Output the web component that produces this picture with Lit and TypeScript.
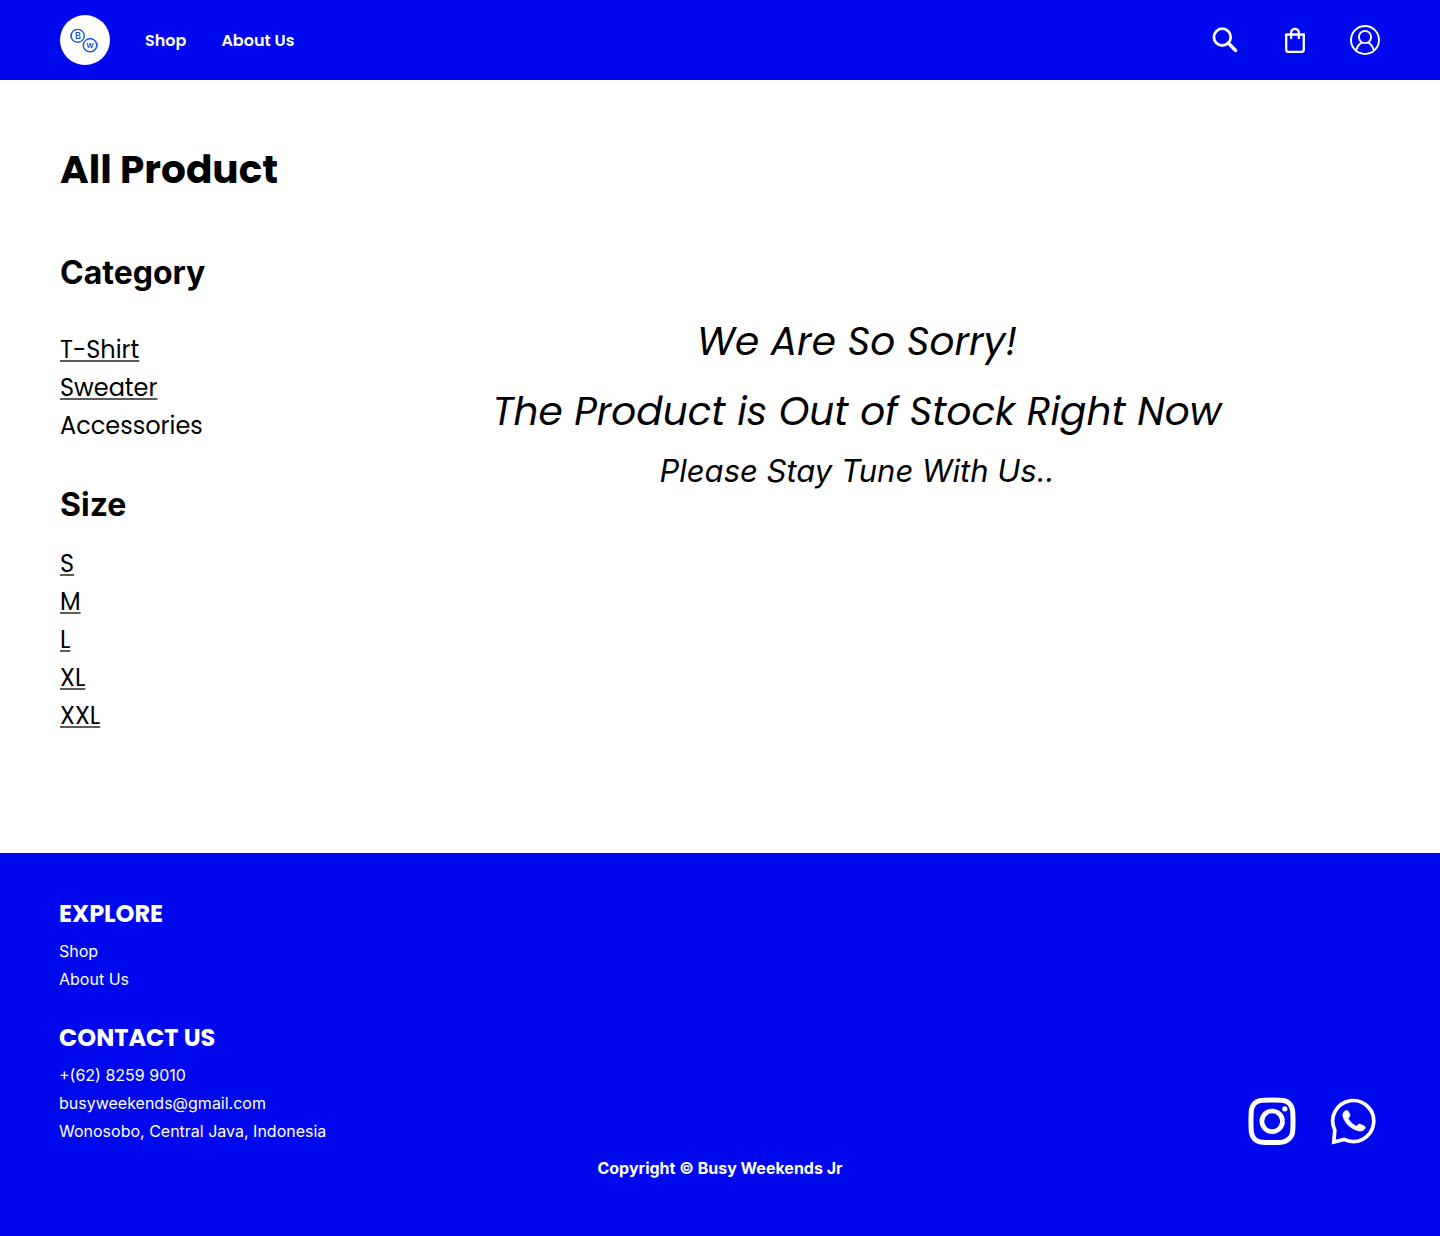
import { LitElement, html, css, svg } from "lit";
import { customElement } from "lit/decorators.js";

const logo = svg`<svg class="logo-art" viewBox="0 0 50 50" aria-hidden="true">
  <circle cx="25" cy="25" r="25" fill="#fff"/>
  <g fill="none" stroke="#1155d4">
    <circle cx="17.7" cy="20.7" r="6.5" stroke-width="1.1"/>
    <ellipse cx="17.5" cy="20.9" rx="7" ry="6.3" stroke-width=".7"/>
    <circle cx="30" cy="30.3" r="6.6" stroke-width="1.200"/>
    <ellipse cx="30.2" cy="30.2" rx="7.2" ry="6.5" stroke-width=".8"/>
  </g>
  <text class="logo-letter" x="18" y="24">B</text>
  <text class="logo-letter" x="30" y="33">w</text>
</svg>`;

const searchIcon = svg`<svg class="icon" viewBox="0 0 30 30" fill="none" stroke="#fff" aria-hidden="true">
  <circle cx="12.3" cy="12.1" r="8.400" stroke-width="2.800"/>
  <path d="M18.300 18.100L25.600 25.400" stroke-width="3.500" stroke-linecap="round"/>
</svg>`;

const bagIcon = svg`<svg class="icon" viewBox="0 0 30 30" fill="none" stroke="#fff" stroke-width="2.300" aria-hidden="true">
  <path d="M6.200 9.500H23.800V24.500a2.400 2.400 0 0 1-2.400 2.400H8.600a2.400 2.400 0 0 1-2.400-2.400Z" stroke-linejoin="round"/>
  <path d="M11.200 13.200V7.600a3.800 3.800 0 0 1 7.600 0V13.200" stroke-linecap="round"/>
</svg>`;

const userIcon = svg`<svg class="icon" viewBox="0 0 30 30" fill="none" stroke="#fff" stroke-width="1.900" aria-hidden="true">
  <circle cx="15" cy="15" r="14"/>
  <circle cx="15" cy="12" r="6.100"/>
  <path d="M6 25.500C7.200 21.500 9.200 19 12 17.400M24 25.500C22.800 21.500 20.800 19 18 17.400"/>
</svg>`;

const instagramIcon = svg`<svg class="social-icon" viewBox="0 0 48 48" fill="none" stroke="#fff" aria-hidden="true">
  <path d="M24 3C35 3 38.200 3.200 41.400 6.500S45 13 45 24.300S44.700 38.300 41.400 41.600S35 45.600 24 45.600S9.800 45.300 6.500 41.900S3 35.500 3 24.300S3.200 9.800 6.500 6.500S13 3 24 3Z" stroke-width="5"/>
  <circle cx="24.200" cy="24.300" r="10.300" stroke-width="4.700"/>
  <circle cx="36.800" cy="11.800" r="2.600" fill="#fff" stroke="none"/>
</svg>`;

const whatsappIcon = svg`<svg class="social-icon" viewBox="-1 0 48 48" aria-hidden="true">
  <path d="M4.300 32.800A20.500 20.500 0 1 1 13.600 42.200L3.300 44.800Z" transform="translate(.5 .2)" fill="none" stroke="#fff" stroke-width="3.700"/>
  <path d="M14.600 14.200C15.800 13.200 17.600 13.100 18.300 14.200L19.900 17.600C20.300 18.800 19.600 19.700 18.200 21.500C20 25 22.600 27.500 26.500 29.200C28.200 27.400 29.200 26.700 30.400 27.200L34.600 29.200C35.800 29.900 35.200 31.600 34 32.700C32.500 34.100 30.300 34.400 28 33.800C20.500 31.700 15 26.500 13 19.600C12.400 17.500 13.100 15.600 14.600 14.200Z" fill="#fff" stroke="#fff" stroke-width=".6"/>
</svg>`;

@customElement("app-root")
export class AppRoot extends LitElement {
  static styles = css`
    :host {
      display: flex;
      flex-direction: column;
      min-height: 100vh;
      background: #fff;
      color: #000;
      font-family: Inter, sans-serif;
    }
    h1, h2, p, ul { margin: 0; padding: 0; }
    ul { list-style: none; }
    a { color: inherit; text-decoration: none; }
    .display { font-family: Poppins, Inter, sans-serif; }

    .header {
      display: flex;
      align-items: center;
      justify-content: space-between;
      padding: 15px 60px;
      background: #0008ee;
      color: #fff;
    }
    .nav, .actions { display: flex; align-items: center; }
    .nav { gap: 35px; font-size: 16px; font-weight: 600; }
    .actions { gap: 40px; }
    .logo-art { display: block; width: 50px; height: 50px; }
    .logo-letter {
      fill: #1155d4;
      font-family: Inter, sans-serif;
      font-size: 9px;
      font-weight: 600;
      text-anchor: middle;
    }
    .action {
      display: block;
      padding: 0;
      border: 0;
      background: none;
      cursor: pointer;
    }
    .icon { display: block; width: 30px; height: 30px; }

    .main { flex: 1; padding: 60px 60px 118px; }
    .title { font-size: 39px; line-height: 60px; font-weight: 700; }
    .content { display: flex; margin-top: 53px; }
    .filters { flex: 0 0 274px; }
    .filter-title { font-size: 32px; line-height: 40px; font-weight: 700; }
    .filter-list { font-size: 24px; line-height: 38px; }
    .categories { margin: 38px 0 40px; }
    .sizes { margin-top: 20px; }
    .link {
      text-decoration: underline 2px #5c5c5c;
      text-underline-offset: 2px;
      text-decoration-skip-ink: none;
    }
    .message { flex: 1; padding-top: 54px; text-align: center; font-style: italic; }
    .lead { font-size: 39px; line-height: 70px; }
    .note { font-size: 31px; line-height: 48px; }

    .footer { padding: 43px 59px 54px; background: #0008ee; color: #fff; }
    .footer-row { display: flex; align-items: flex-end; justify-content: space-between; }
    .footer-groups { display: grid; gap: 27px; }
    .footer-title { font-size: 24px; line-height: 36px; font-weight: 700; margin-bottom: 5px; }
    .footer-list { font-size: 16px; line-height: 28px; }
    .socials { display: flex; gap: 33px; padding-right: 4px; }
    .social-icon { display: block; width: 48px; height: 48px; }
    .copyright {
      margin-top: 9px;
      font-size: 16px;
      line-height: 28px;
      font-weight: 700;
      text-align: center;
    }
  `;

  private categories = [
    { name: "T-Shirt", linked: true },
    { name: "Sweater", linked: true },
    { name: "Accessories", linked: false },
  ];
  private sizes = ["S", "M", "L", "XL", "XXL"];

  render() {
    return html`
      <header class="header">
        <nav class="nav display" aria-label="Main">
          <a href="#home" aria-label="Home">${logo}</a>
          <a href="#shop">Shop</a>
          <a href="#about">About Us</a>
        </nav>
        <div class="actions">
          <button class="action" type="button" aria-label="Search">${searchIcon}</button>
          <button class="action" type="button" aria-label="Bag">${bagIcon}</button>
          <button class="action" type="button" aria-label="Account">${userIcon}</button>
        </div>
      </header>

      <main class="main">
        <h1 class="title display">All Product</h1>
        <div class="content">
          <aside class="filters">
            <h2 class="filter-title">Category</h2>
            <ul class="filter-list categories display">
              ${this.categories.map(
                (c) => html`<li><a class=${c.linked ? "link" : ""} href="#${c.name}">${c.name}</a></li>`
              )}
            </ul>
            <h2 class="filter-title">Size</h2>
            <ul class="filter-list sizes display">
              ${this.sizes.map((s) => html`<li><a class="link" href="#${s}">${s}</a></li>`)}
            </ul>
          </aside>
          <section class="message">
            <p class="lead display">We Are So Sorry!</p>
            <p class="lead display">The Product is Out of Stock Right Now</p>
            <p class="note">Please Stay Tune With Us..</p>
          </section>
        </div>
      </main>

      <footer class="footer">
        <div class="footer-row">
          <div class="footer-groups">
            <section>
              <h2 class="footer-title display">EXPLORE</h2>
              <ul class="footer-list">
                <li><a href="#shop">Shop</a></li>
                <li><a href="#about">About Us</a></li>
              </ul>
            </section>
            <section>
              <h2 class="footer-title display">CONTACT US</h2>
              <ul class="footer-list">
                <li><a href="tel:+6282599010">+(62) 8259 9010</a></li>
                <li><a href="mailto:busyweekends@gmail.com">busyweekends@gmail.com</a></li>
                <li>Wonosobo, Central Java, Indonesia</li>
              </ul>
            </section>
          </div>
          <div class="socials">
            <a href="#instagram" aria-label="Instagram">${instagramIcon}</a>
            <a href="#whatsapp" aria-label="WhatsApp">${whatsappIcon}</a>
          </div>
        </div>
        <p class="copyright">Copyright © Busy Weekends Jr</p>
      </footer>
    `;
  }
}
